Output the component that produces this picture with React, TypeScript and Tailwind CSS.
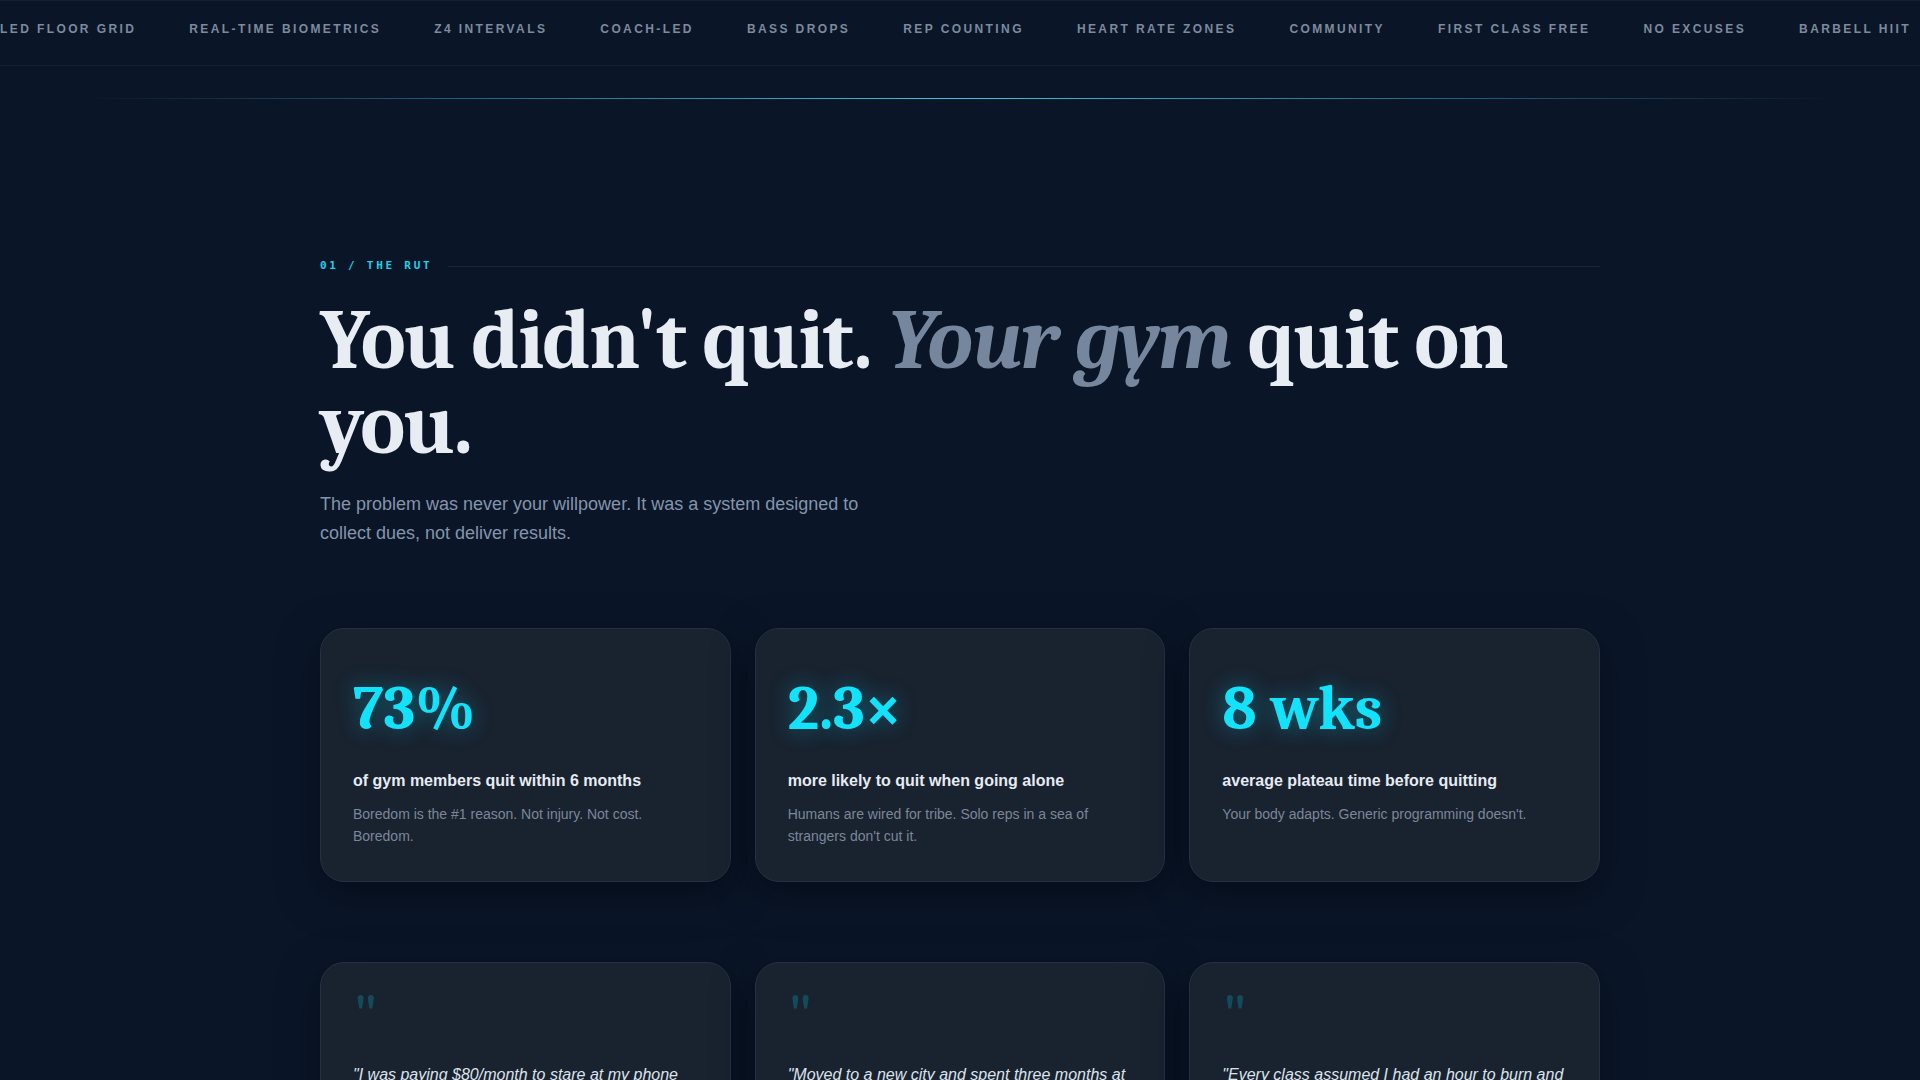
import React from 'react'

const tickerItems = [
  'LED FLOOR GRID',
  'REAL-TIME BIOMETRICS',
  'Z4 INTERVALS',
  'COACH-LED',
  'BASS DROPS',
  'REP COUNTING',
  'HEART RATE ZONES',
  'COMMUNITY',
  'FIRST CLASS FREE',
  'NO EXCUSES',
  'BARBELL HIIT',
]

const stats = [
  {
    value: '73%',
    title: 'of gym members quit within 6 months',
    body: 'Boredom is the #1 reason. Not injury. Not cost. Boredom.',
  },
  {
    value: '2.3×',
    title: 'more likely to quit when going alone',
    body: "Humans are wired for tribe. Solo reps in a sea of strangers don't cut it.",
  },
  {
    value: '8 wks',
    title: 'average plateau time before quitting',
    body: "Your body adapts. Generic programming doesn't.",
  },
]

const quotes = [
  '"I was paying $80/month to stare at my phone between sets. Nobody noticed when I stopped showing up."',
  '"Moved to a new city and spent three months at a gym where nobody knew my name."',
  '"Every class assumed I had an hour to burn and a body that already knew what it was doing."',
]

function Ticker() {
  const list = [...tickerItems, ...tickerItems]
  return (
    <div className="h-[66px] border-y border-[#142034] overflow-hidden">
      <div className="flex items-center h-full pb-2 whitespace-nowrap font-['Liberation_Sans',Arial,sans-serif] text-[12px] font-bold tracking-[0.2em] text-[#7d8a9c]">
        {list.map((item, i) => (
          <React.Fragment key={i}>
            <span>{item}</span>
            <span className="ml-[27px] mr-[26px] inline-block w-[3px] h-[3px] rounded-full bg-[#145866] translate-y-[4px]" />
          </React.Fragment>
        ))}
      </div>
    </div>
  )
}

function StatCard({ value, title, body }: { value: string; title: string; body: string }) {
  return (
    <div className="rounded-3xl border border-[#263044] bg-[#19222f] px-8 pt-[49px] pb-[34px] shadow-[0_12px_40px_rgba(2,6,15,0.55)]">
      <div className="font-serif font-bold text-[62px] leading-none text-[#12e3fb] [text-shadow:0_0_22px_rgba(0,220,255,0.4)]">
        {value}
      </div>
      <div className="mt-[29px] text-[16px] leading-6 font-bold text-[#e6ebf2]">{title}</div>
      <p className="mt-[10px] text-[14px] leading-[22px] text-[#7b8799]">{body}</p>
    </div>
  )
}

function QuoteCard({ text }: { text: string }) {
  return (
    <div className="rounded-3xl border border-[#263044] bg-[#19222f] px-8 pt-8 pb-10 shadow-[0_12px_40px_rgba(2,6,15,0.55)]">
      <div className="-mt-[9px] h-[64px] font-serif text-[64px] leading-none text-[#134b5b]">"</div>
      <p className="mt-[12px] text-[16px] leading-[1.6] italic text-[#dce3ec]">{text}</p>
    </div>
  )
}

export default function App() {
  return (
    <div className="min-h-screen bg-[#0a1628] font-['Liberation_Sans',Arial,sans-serif] overflow-hidden">
      <Ticker />

      {/* glowing divider under the ticker */}
      <div className="mt-[32px] mx-[86px] h-px bg-gradient-to-r from-transparent via-[#3cc4e0] to-transparent" />

      <section className="mx-auto w-[1280px] pt-[159px] pb-24">
        <div className="flex items-center gap-4">
          <span className="font-['DejaVu_Sans_Mono',monospace] text-[11px] leading-4 font-bold tracking-[0.25em] text-[#1fcfe8]">
            01 / THE RUT
          </span>
          <div className="flex-1 h-px bg-[#1a2536]" />
        </div>

        <h1 className="mt-6 font-serif font-bold text-[85px] leading-none tracking-[-0.02em] text-[#e8edf4]">
          You didn't quit. <em className="text-[#76869c]">Your gym</em> quit on you.
        </h1>

        <p className="mt-[22px] max-w-[560px] text-[18px] leading-[1.6] text-[#8494aa]">
          The problem was never your willpower. It was a system designed to collect dues, not deliver results.
        </p>

        <div className="mt-20 grid grid-cols-3 gap-6">
          {stats.map(s => (
            <StatCard key={s.value} {...s} />
          ))}
        </div>

        <div className="mt-20 grid grid-cols-3 gap-6">
          {quotes.map(q => (
            <QuoteCard key={q} text={q} />
          ))}
        </div>
      </section>
    </div>
  )
}
